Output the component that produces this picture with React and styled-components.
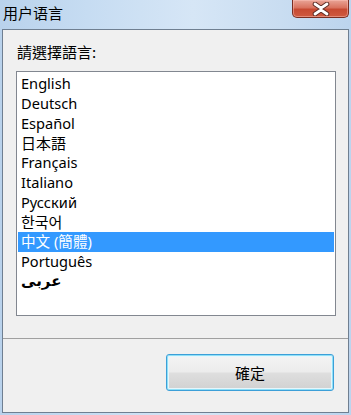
import React from "react";
import styled, { createGlobalStyle } from "styled-components";

const Global = createGlobalStyle`
  html, body { margin: 0; padding: 0; }
  body { width: 351px; height: 415px; overflow: hidden; font-family: "Noto Sans", "Noto Sans CJK SC", sans-serif; }
`;

const Window = styled.div`
  width: 351px;
  height: 415px;
  box-sizing: border-box;
  display: flex;
  flex-direction: column;
  background: linear-gradient(90deg, #b9d2ec 0%, #c6dcf2 25%, #d6e6f6 55%, #c9ddf1 80%, #bcd4ee 100%);
`;

const TitleBar = styled.div`
  height: 29px;
  display: flex;
  align-items: flex-start;
  justify-content: space-between;
  flex-shrink: 0;
`;

const Title = styled.div`
  font-family: "Noto Sans CJK SC", sans-serif;
  font-size: 15px;
  line-height: 20px;
  color: #000;
  padding: 3px 0 0 3px;
`;

const CloseButton = styled.div`
  width: 57px;
  height: 18px;
  margin-right: 2px;
  box-sizing: border-box;
  border: 1px solid #7a2e22;
  border-top: none;
  border-radius: 0 0 5px 5px;
  background: linear-gradient(180deg, #e9a597 0%, #d9735f 45%, #c74a32 55%, #cf5a40 100%);
  box-shadow: inset 0 0 0 1px rgba(255, 200, 190, 0.45);
  display: flex;
  align-items: center;
  justify-content: center;
`;

const Client = styled.div`
  flex: 1;
  margin: 0 2px 2px 2px;
  border: 1px solid #6f7f91;
  background: #f0f0f0;
  display: flex;
  flex-direction: column;
  box-sizing: border-box;
`;

const Label = styled.div`
  font-family: "Noto Sans CJK TC", sans-serif;
  font-size: 15px;
  line-height: 20px;
  color: #000;
  margin: 12px 0 0 14px;
`;

const ListBox = styled.div`
  margin: 9px 0 0 13px;
  width: 320px;
  height: 245px;
  box-sizing: border-box;
  border: 1px solid #828790;
  background: #fff;
  padding: 2px 1px 1px 1px;
  display: flex;
  flex-direction: column;
`;

const Item = styled.div`
  height: 19.75px;
  line-height: 19.75px;
  padding-left: 3px;
  font-family: ${(p) => p.$font || '"Noto Sans", "Noto Sans CJK JP", sans-serif'};
  font-size: ${(p) => p.$size || 14.6}px;
  font-weight: ${(p) => (p.$bold ? 700 : 400)};
  color: ${(p) => (p.$selected ? "#fff" : "#000")};
  background: ${(p) => (p.$selected ? "#3399ff" : "transparent")};
  white-space: nowrap;
`;

const Separator = styled.div`
  margin-top: 22px;
  border-top: 1px solid #a0a0a0;
`;

const Footer = styled.div`
  flex: 1;
  display: flex;
  justify-content: flex-end;
  align-items: flex-start;
  padding: 15px 14px 0 0;
`;

const Button = styled.button`
  width: 168px;
  height: 37px;
  box-sizing: border-box;
  border: 1px solid #3c9fd8;
  border-radius: 3px;
  box-shadow: inset 0 0 0 1px #8fe0f7, inset 0 0 0 2px #e6f6fc;
  background: linear-gradient(180deg, #f4f4f4 0%, #ececec 48%, #dedede 52%, #d1d1d1 100%);
  font-family: "Noto Sans CJK TC", sans-serif;
  font-size: 15px;
  color: #000;
  padding: 0;
  cursor: pointer;
`;

const languages = [
  { name: "English" },
  { name: "Deutsch" },
  { name: "Español" },
  { name: "日本語", font: '"Noto Sans CJK JP", sans-serif', size: 15 },
  { name: "Français" },
  { name: "Italiano" },
  { name: "Русский" },
  { name: "한국어", font: '"Noto Sans CJK KR", sans-serif', size: 15 },
  { name: "中文 (簡體)", font: '"Noto Sans", "Noto Sans CJK TC", sans-serif', selected: true },
  { name: "Português" },
  { name: "عربى", font: '"DejaVu Sans", sans-serif', bold: true, size: 15 },
];

export default function App() {
  return (
    <>
      <Global />
      <Window>
        <TitleBar>
          <Title>用户语言</Title>
          <CloseButton>
            <svg width="18" height="14" viewBox="0 0 18 14">
              <path
                d="M3 2 L9 6.2 L15 2 M3 12 L9 7.8 L15 12"
                fill="none"
                stroke="#5a2a22"
                strokeWidth="4.6"
                strokeLinecap="round"
                strokeLinejoin="round"
              />
              <path
                d="M3 2 L9 6.2 L15 2 M3 12 L9 7.8 L15 12"
                fill="none"
                stroke="#ffffff"
                strokeWidth="2.8"
                strokeLinecap="round"
                strokeLinejoin="round"
              />
            </svg>
          </CloseButton>
        </TitleBar>
        <Client>
          <Label>請選擇語言:</Label>
          <ListBox>
            {languages.map((l) => (
              <Item key={l.name} $font={l.font} $bold={l.bold} $size={l.size} $selected={l.selected}>
                {l.name}
              </Item>
            ))}
          </ListBox>
          <Separator />
          <Footer>
            <Button>確定</Button>
          </Footer>
        </Client>
      </Window>
    </>
  );
}
